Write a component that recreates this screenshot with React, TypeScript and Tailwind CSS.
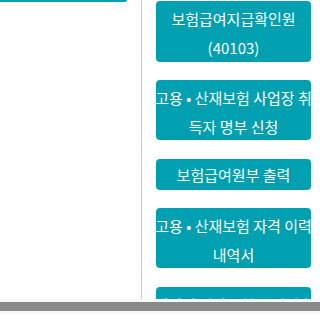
import React from "react";

const font = { fontFamily: '"Noto Sans CJK KR", "Noto Sans", sans-serif' };

function Btn({ lines, className = "" }: { lines: string[]; className?: string }) {
  return (
    <div
      className={`w-[155px] shrink-0 rounded-[4px] bg-[#00a0b0] text-center text-[15px] text-white whitespace-nowrap flex flex-col items-center ${className}`}
    >
      {lines.map((l, i) => (
        <div key={i}>{l}</div>
      ))}
    </div>
  );
}

export default function App() {
  return (
    <div className="w-[320px] h-[314px] bg-white overflow-hidden" style={font}>
      <div className="flex h-[299px] overflow-hidden">
        <div className="w-[141px] shrink-0">
          <div className="h-[2px] w-[127px] rounded-br-[2px] bg-[#00a0b0]" />
        </div>
        <div className="w-px shrink-0 bg-[#cccccc]" />
        <div className="flex flex-col pl-[14px] pt-px">
          <Btn lines={["보험급여지급확인원", "(40103)"]} className="h-[61px] pt-[3px] leading-[29px] mb-[18px]" />
          <Btn lines={["고용 • 산재보험 사업장 취", "득자 명부 신청"]} className="h-[60px] pt-[3px] leading-[29px] mb-[19px]" />
          <Btn lines={["보험급여원부 출력"]} className="h-[31px] pt-px leading-[30px] mb-[18px]" />
          <Btn lines={["고용 • 산재보험 자격 이력", "내역서"]} className="h-[60px] pt-[3px] leading-[29px] mb-[19px]" />
          <Btn lines={["개인별 건강보험 고지산출", "내역"]} className="h-[60px] pt-[3px] leading-[29px]" />
        </div>
      </div>
      <div className="h-[15px] bg-[#f8f8f8] pt-[3px]">
        <div className="h-[9px] w-full bg-[#8a8a8a]" />
      </div>
    </div>
  );
}
